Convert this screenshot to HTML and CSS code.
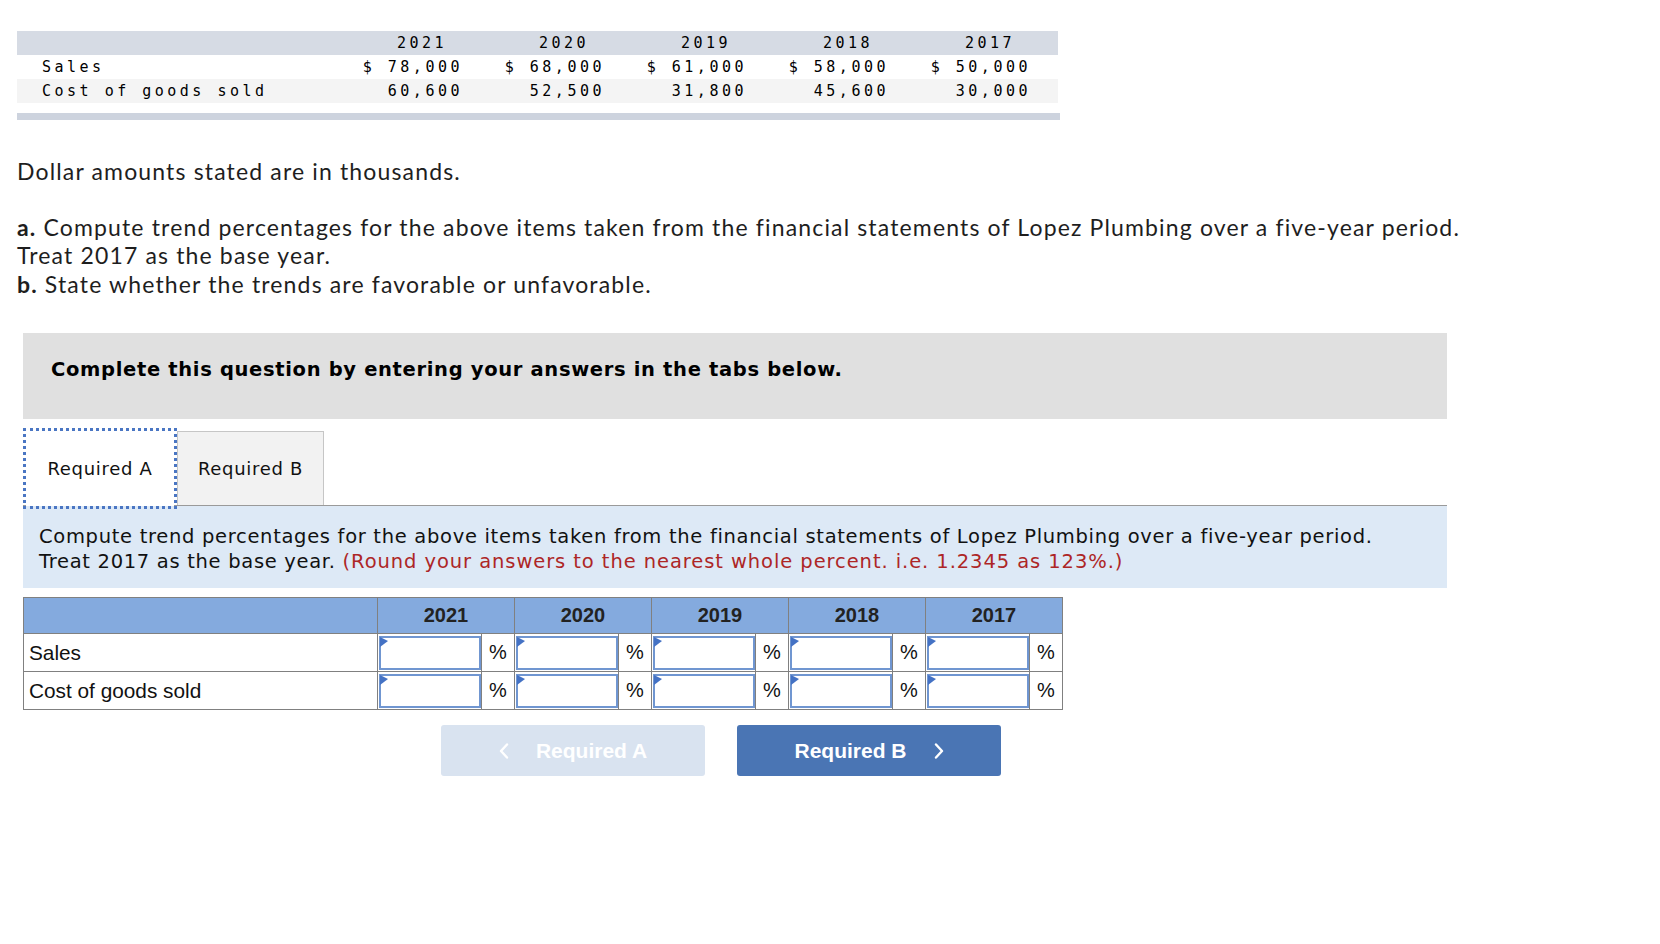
FILE: index.html
```html
<!DOCTYPE html>
<html lang="en">
<head>
<meta charset="utf-8">
<title>Trend percentages</title>
<link rel="stylesheet" href="styles.css">
</head>
<body>
<div class="page">
  <table class="data">
    <thead>
      <tr><th class="label"></th><th class="yr">2021</th><th class="yr">2020</th><th class="yr">2019</th><th class="yr">2018</th><th class="yr">2017</th></tr>
    </thead>
    <tbody>
      <tr><td class="label">Sales</td><td class="num">$ 78,000</td><td class="num">$ 68,000</td><td class="num">$ 61,000</td><td class="num">$ 58,000</td><td class="num">$ 50,000</td></tr>
      <tr class="alt"><td class="label">Cost of goods sold</td><td class="num">60,600</td><td class="num">52,500</td><td class="num">31,800</td><td class="num">45,600</td><td class="num">30,000</td></tr>
    </tbody>
  </table>
  <div class="data-foot"></div>

  <p class="note">Dollar amounts stated are in thousands.</p>
  <div class="reqs">
    <p><b>a.</b> Compute trend percentages for the above items taken from the financial statements of Lopez Plumbing over a five-year period.<br>Treat 2017 as the base year.</p>
    <p><b>b.</b> State whether the trends are favorable or unfavorable.</p>
  </div>

  <div class="question">
    <div class="banner"><h2>Complete this question by entering your answers in the tabs below.</h2></div>
    <div class="tabs">
      <button class="tab active">Required A</button>
      <button class="tab">Required B</button>
    </div>
    <div class="instr">Compute trend percentages for the above items taken from the financial statements of Lopez Plumbing over a five-year period.<br>Treat 2017 as the base year. <span class="red">(Round your answers to the nearest whole percent. i.e. 1.2345 as 123%.)</span></div>

    <table class="answer">
      <colgroup>
        <col class="c-label"><col class="c-in"><col class="c-pct"><col class="c-in"><col class="c-pct"><col class="c-in"><col class="c-pct"><col class="c-in"><col class="c-pct"><col class="c-in"><col class="c-pct">
      </colgroup>
      <thead>
        <tr><th></th><th colspan="2">2021</th><th colspan="2">2020</th><th colspan="2">2019</th><th colspan="2">2018</th><th colspan="2">2017</th></tr>
      </thead>
      <tbody>
        <tr>
          <td class="rl">Sales</td>
          <td class="in"><span class="flag"></span><input type="text"></td><td class="pct">%</td>
          <td class="in"><span class="flag"></span><input type="text"></td><td class="pct">%</td>
          <td class="in"><span class="flag"></span><input type="text"></td><td class="pct">%</td>
          <td class="in"><span class="flag"></span><input type="text"></td><td class="pct">%</td>
          <td class="in"><span class="flag"></span><input type="text"></td><td class="pct">%</td>
        </tr>
        <tr>
          <td class="rl">Cost of goods sold</td>
          <td class="in"><span class="flag"></span><input type="text"></td><td class="pct">%</td>
          <td class="in"><span class="flag"></span><input type="text"></td><td class="pct">%</td>
          <td class="in"><span class="flag"></span><input type="text"></td><td class="pct">%</td>
          <td class="in"><span class="flag"></span><input type="text"></td><td class="pct">%</td>
          <td class="in"><span class="flag"></span><input type="text"></td><td class="pct">%</td>
        </tr>
      </tbody>
    </table>

    <div class="nav">
      <button class="nav-btn prev" disabled><svg class="chev" viewBox="0 0 10 16" width="10" height="16"><polyline points="8,1.5 2,8 8,14.5"/></svg><span>Required A</span></button>
      <button class="nav-btn next"><span>Required B</span><svg class="chev" viewBox="0 0 10 16" width="10" height="16"><polyline points="2,1.5 8,8 2,14.5"/></svg></button>
    </div>
  </div>
</div>
</body>
</html>
```

FILE: styles.css
```css
* { box-sizing: border-box; }

body {
  margin: 0;
  background: #fff;
  color: #1e1e1e;
  font-family: Lato, "Open Sans", sans-serif;
}

.page {
  padding: 31px 0 40px 17px;
}

/* ---------- source data table ---------- */
.data {
  border-collapse: collapse;
  table-layout: fixed;
  width: 1041px;
  font-family: "DejaVu Sans Mono", Menlo, monospace;
  font-size: 15px;
  letter-spacing: 3.5px;
  color: #000;
}
.data th, .data td {
  height: 24px;
  padding: 0;
  font-weight: normal;
  white-space: pre;
}
.data thead tr { background: #d6dbe4; }
.data .alt { background: #f4f4f4; }
.data .label { width: 331px; text-align: left; padding-left: 25px; }
.data .num { width: 142px; text-align: right; padding-right: 27px; }
.data .yr { width: 142px; text-align: right; padding-right: 43px; }

.data-foot {
  width: 1043px;
  height: 7px;
  margin-top: 10px;
  background: #cdd3de;
}

/* ---------- statement text ---------- */
.note, .reqs p {
  margin: 0;
  font-size: 23px;
  letter-spacing: 1.15px;
  line-height: 28.5px;
}
.note { margin-top: 37px; }
.reqs { margin-top: 27px; }
.reqs b { font-weight: 700; }

/* ---------- question area ---------- */
.question {
  width: 1424px;
  margin: 35px 0 0 6px;
}

.banner {
  height: 86px;
  padding: 25px 0 0 28px;
  background: #e0e0e0;
}
.banner h2 {
  margin: 0;
  font-family: "DejaVu Sans", Verdana, sans-serif;
  font-size: 19.5px;
  letter-spacing: 0.67px;
  font-weight: 700;
  line-height: 1.2;
  color: #000;
}

.tabs {
  display: flex;
  align-items: flex-end;
  padding-top: 12px;
  border-bottom: 1px solid #9a9a9a;
}
.tab {
  height: 74px;
  padding: 0;
  font-family: "DejaVu Sans", Verdana, sans-serif;
  font-size: 18px;
  letter-spacing: 0.7px;
  color: #111;
  cursor: pointer;
}
.tab.active {
  position: relative;
  width: 148px;
  height: 75px;
  margin: 0 0 -1px 3px;
  border: none;
  background: #fff;
  outline: 3px dotted #4a76c3;
}
.tab:not(.active) {
  width: 147px;
  margin-left: 3px;
  border: 1px solid #c6c6c6;
  border-bottom: none;
  background: #f2f2f2;
}

.instr {
  height: 82px;
  padding: 18px 17px 0 16px;
  background: #dde9f6;
  font-family: "DejaVu Sans", Verdana, sans-serif;
  font-size: 19.5px;
  letter-spacing: 0.69px;
  line-height: 25px;
  color: #111;
}
.red { color: #ad2626; letter-spacing: 0.92px; }

/* ---------- answer table ---------- */
.answer {
  margin-top: 9px;
  border-collapse: collapse;
  table-layout: fixed;
  width: 1039px;
  font-family: "Liberation Sans", Arial, sans-serif;
  font-size: 20px;
  color: #111;
}
.c-label { width: 354px; }
.c-in { width: 104px; }
.c-pct { width: 33px; }
.answer th, .answer td {
  border: 1px solid #808080;
  padding: 0;
}
.answer th {
  height: 36px;
  background: #84aade;
  font-weight: 700;
  color: #222;
  text-align: center;
}
.answer td { height: 38px; }
.answer .rl { padding-left: 5px; font-size: 20.8px; }
.answer .pct { text-align: center; }
.answer .in { position: relative; padding: 1px 1px 0 1px; }
.answer input {
  display: block;
  width: 102px;
  height: 34px;
  margin: 0;
  border: 2px solid #7096d1;
  background: #fff;
  font: inherit;
}
.flag {
  position: absolute;
  top: 3px;
  left: 2px;
  width: 8px;
  height: 10px;
  background: #4472c4;
  clip-path: polygon(0 0, 100% 40%, 0 100%);
}

/* ---------- navigation ---------- */
.nav {
  display: flex;
  gap: 32px;
  margin-top: 15px;
  padding-left: 418px;
}
.nav-btn {
  display: flex;
  align-items: center;
  justify-content: center;
  gap: 27px;
  width: 264px;
  height: 51px;
  border: none;
  border-radius: 3px;
  font-family: "Liberation Sans", Arial, sans-serif;
  font-size: 21px;
  font-weight: 700;
  color: #fff;
}
.prev { background: #d9e3f0; }
.next { background: #4a75b4; cursor: pointer; }
.chev polyline {
  fill: none;
  stroke: #fff;
  stroke-width: 2.4;
  stroke-linecap: round;
  stroke-linejoin: round;
}
```
